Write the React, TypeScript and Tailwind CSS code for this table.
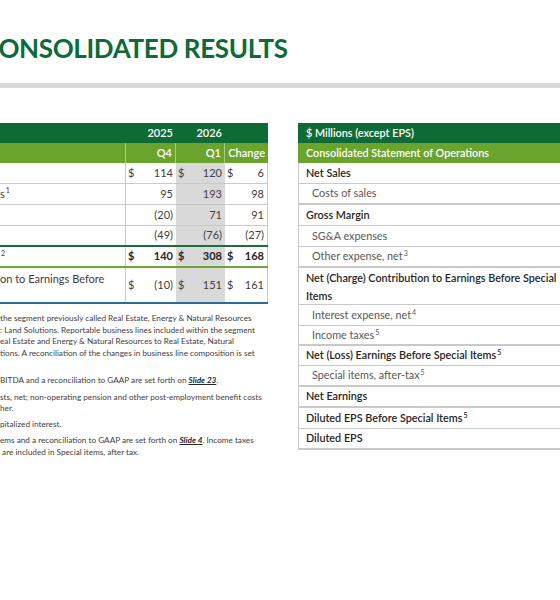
import React from "react";

type Line = "gray" | "dark" | "light" | "blue";

const lineCls: Record<Line, string> = {
  gray: "border-b border-[#c9c9c9]",
  dark: "border-b-2 border-[#1b6d3a]",
  light: "border-b-2 border-[#6ea83a]",
  blue: "border-b-2 border-[#2a6d9c]",
};

interface LeftRow {
  label: string;
  sup?: string;
  q4: string;
  q1: string;
  ch: string;
  dollar?: boolean;
  bold?: boolean;
  tall?: boolean;
  line: Line;
}

const leftRows: LeftRow[] = [
  { label: "", q4: "114", q1: "120", ch: "6", dollar: true, line: "gray" },
  { label: "s", sup: "1", q4: "95", q1: "193", ch: "98", line: "gray" },
  { label: "", q4: "(20)", q1: "71", ch: "91", line: "gray" },
  { label: "", q4: "(49)", q1: "(76)", ch: "(27)", line: "dark" },
  { label: "", sup: "2", q4: "140", q1: "308", ch: "168", dollar: true, bold: true, line: "light" },
  { label: "on to Earnings Before", q4: "(10)", q1: "151", ch: "161", dollar: true, tall: true, line: "blue" },
];

interface RightRow {
  label: React.ReactNode;
  bold?: boolean;
  tall?: boolean;
  h?: string;
  line: Line;
}

const Sup = ({ n }: { n: string }) => <sup className="text-[7px] relative -top-[4px] ml-[1px]">{n}</sup>;

const rightRows: RightRow[] = [
  { label: "Net Sales", bold: true, line: "gray" },
  { label: "Costs of sales", line: "dark" },
  { label: "Gross Margin", bold: true, line: "gray" },
  { label: "SG&A expenses", line: "gray" },
  { label: <>Other expense, net<Sup n="3" /></>, line: "dark" },
  {
    label: (
      <>
        Net (Charge) Contribution to Earnings Before Special
        <br />
        Items
      </>
    ),
    bold: true,
    tall: true,
    line: "gray",
  },
  { label: <>Interest expense, net<Sup n="4" /></>, line: "gray" },
  { label: <>Income taxes<Sup n="5" /></>, h: "h-[20px]", line: "dark" },
  { label: <>Net (Loss) Earnings Before Special Items<Sup n="5" /></>, bold: true, h: "h-[20px]", line: "gray" },
  { label: <>Special items, after-tax<Sup n="5" /></>, line: "dark" },
  { label: "Net Earnings", bold: true, line: "dark" },
  { label: <>Diluted EPS Before Special Items<Sup n="5" /></>, bold: true, line: "gray" },
  { label: "Diluted EPS", bold: true, line: "blue" },
];

function Num({ v, dollar, w, shade, bold }: { v: string; dollar?: boolean; w: string; shade?: boolean; bold?: boolean }) {
  return (
    <div
      className={`${w} h-full flex items-center justify-between pl-[2px] pr-[3px] ${shade ? "bg-[#d9d9d9]" : ""} ${
        bold ? "font-bold text-[#262626]" : "text-[#404040]"
      }`}
    >
      <span>{dollar ? "$" : ""}</span>
      <span>{v}</span>
    </div>
  );
}

function LeftTable() {
  return (
    <div className="w-[268px] text-[11px]">
      <div className="h-[20px] flex bg-[#0e6b36] text-white font-semibold">
        <div className="w-[126px]" />
        <div className="w-[50px] text-right pr-[3px] leading-[20px]">2025</div>
        <div className="w-[49px] text-right pr-[3px] leading-[20px]">2026</div>
        <div className="w-[43px]" />
      </div>
      <div className="h-[20px] flex bg-[#6ba42c] text-white font-semibold leading-[20px]">
        <div className="w-[126px] border-r border-[#a8cc86]" />
        <div className="w-[50px] text-right pr-[3px] border-r border-[#a8cc86]">Q4</div>
        <div className="w-[49px] text-right pr-[3px] border-r border-[#a8cc86]">Q1</div>
        <div className="w-[43px] text-right pr-[3px]">Change</div>
      </div>
      {leftRows.map((r, i) => (
        <div key={i} className={`flex ${r.tall ? "h-[36px]" : "h-[21px]"} ${lineCls[r.line]}`}>
          <div className={`w-[126px] border-r border-[#c9c9c9] text-[#404040] ${r.tall ? "pt-[3px]" : "flex items-center"}`}>
            {r.label}
            {r.sup && <Sup n={r.sup} />}
          </div>
          <Num v={r.q4} dollar={r.dollar} w="w-[50px]" bold={r.bold} />
          <Num v={r.q1} dollar={r.dollar} w="w-[49px]" shade bold={r.bold} />
          <div className="w-[43px] h-full border-r border-[#c9c9c9]">
            <Num v={r.ch} dollar={r.dollar} w="w-full" bold={r.bold} />
          </div>
        </div>
      ))}
    </div>
  );
}

const Slide = ({ n }: { n: string }) => (
  <span className="font-bold italic underline text-[#262626]">Slide {n}</span>
);

function Footnotes() {
  return (
    <div className="mt-[9px] text-[8.2px] leading-[11.6px] text-[#404040] whitespace-nowrap">
      <div className="mb-[4.5px]">
        <div>the segment previously called Real Estate, Energy &amp; Natural Resources</div>
        <div>: Land Solutions. Reportable business lines included within the segment</div>
        <div>eal Estate and Energy &amp; Natural Resources to Real Estate, Natural</div>
        <div>tions. A reconciliation of the changes in business line composition is set</div>
        <div>&nbsp;</div>
      </div>
      <div className="mb-[4.5px]">
        <div>
          BITDA and a reconciliation to GAAP are set forth on <Slide n="23" />.
        </div>
      </div>
      <div className="mb-[4.5px]">
        <div>sts, net; non-operating pension and other post-employment benefit costs</div>
        <div>her.</div>
      </div>
      <div className="mb-[4.5px]">
        <div>pitalized interest.</div>
      </div>
      <div>
        <div>
          ems and a reconciliation to GAAP are set forth on <Slide n="4" />. Income taxes
        </div>
        <div>&nbsp;are included in Special items, after tax.</div>
      </div>
    </div>
  );
}

function RightTable() {
  return (
    <div className="w-[330px] shrink-0 text-[10.8px]">
      <div className="h-[20px] bg-[#0e6b36] text-white font-semibold leading-[20px] pl-[8px]">$ Millions (except EPS)</div>
      <div className="h-[20px] bg-[#6ba42c] text-white font-semibold leading-[20px] pl-[8px]">
        Consolidated Statement of Operations
      </div>
      {rightRows.map((r, i) => (
        <div
          key={i}
          className={`border-l border-[#c9c9c9] ${r.tall ? "h-[37px] pt-[1px] leading-[18px]" : `${r.h ?? "h-[21px]"} flex items-center`} ${
            lineCls[r.line]
          } ${r.bold ? "font-semibold text-[#262626] pl-[7px]" : "text-[#595959] pl-[13px]"}`}
        >
          <div>{r.label}</div>
        </div>
      ))}
    </div>
  );
}

export default function App() {
  return (
    <div className="w-[560px] h-[600px] bg-white overflow-hidden font-['Lato',sans-serif]">
      <div className="h-[83px] pt-[34px]">
        <h1 className="-ml-[18px] text-[26px] leading-[28px] tracking-[-0.35px] font-bold text-[#0d6b37] whitespace-nowrap">
          CONSOLIDATED RESULTS
        </h1>
      </div>
      <div className="h-[5px] bg-[#d9d9d9]" />
      <div className="flex gap-[30px] mt-[35px]">
        <div className="w-[268px] shrink-0">
          <LeftTable />
          <Footnotes />
        </div>
        <RightTable />
      </div>
    </div>
  );
}
